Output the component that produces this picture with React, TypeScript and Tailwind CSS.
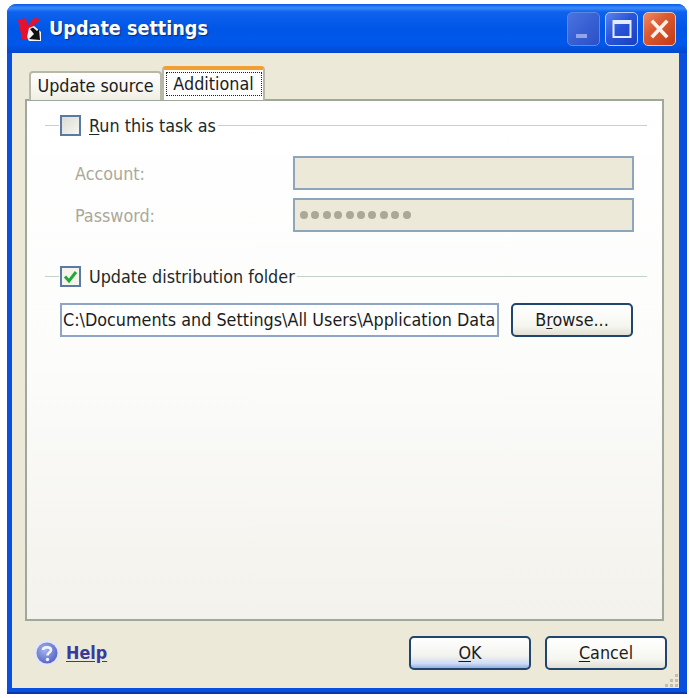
import React from "react";

const FONT = "font-['DejaVu_Sans_Condensed','DejaVu_Sans',sans-serif]";

function LogoK() {
  return (
    <svg width="24" height="24" viewBox="0 0 24 24" className="shrink-0">
      <path d="M1 3 L9 1 L10.5 9 L17 1 L24 2 L15 10 L11 15 L10 23 L5 22 Z" fill="#e8112d" />
      <path d="M12 11 L17 9 L24 15 L24 24 L12 24 L10 20 Z" fill="#f4f4f4" />
      <path d="M13 12 L16 10.5 L20 14 L22 12 L23 23 L12 22 L15 19 L17 17 Z" fill="#111" />
    </svg>
  );
}

function CaptionButton({ kind }: { kind: "min" | "max" | "close" }) {
  const bg =
    kind === "close"
      ? "bg-[linear-gradient(135deg,#ee8a66_0%,#dc5a32_40%,#c23a12_100%)]"
      : kind === "max"
        ? "bg-[linear-gradient(135deg,#5a84ee_0%,#2a55d8_45%,#1a3fc0_100%)]"
        : "bg-[linear-gradient(135deg,#4a74e0_0%,#3a62d4_45%,#2c50c4_100%)]";
  const border = kind === "min" ? "border-[#5f88e4]" : kind === "max" ? "border-[#b8ccf6]" : "border-[#e8c8bc]";
  return (
    <div className={`w-[33px] h-[34px] rounded-[5px] border flex items-center justify-center ${bg} ${border}`}>
      {kind === "min" && (
        <svg width="31" height="32" viewBox="0 0 31 32"><rect x="8" y="21" width="11" height="4" fill="#8fa6e8" /></svg>
      )}
      {kind === "max" && (
        <svg width="31" height="32" viewBox="0 0 31 32">
          <rect x="7.5" y="8" width="17" height="16" fill="none" stroke="#e4ecff" strokeWidth="2" />
          <rect x="7" y="7" width="18" height="4" fill="#e4ecff" />
        </svg>
      )}
      {kind === "close" && (
        <svg width="31" height="32" viewBox="0 0 31 32">
          <path d="M9 9 L22 23 M22 9 L9 23" stroke="#fff0ea" strokeWidth="3.6" strokeLinecap="square" />
        </svg>
      )}
    </div>
  );
}

function Check({ checked }: { checked?: boolean }) {
  return (
    <div
      className={`w-[21px] h-[21px] shrink-0 border-2 border-[#5a7aa4] flex items-center justify-center ${
        checked ? "bg-[#f4f4ec]" : "bg-[linear-gradient(135deg,#dcdcd6_0%,#f6f6f2_100%)]"
      }`}
    >
      {checked && (
        <svg width="15" height="15" viewBox="0 0 15 15">
          <path d="M2 7.5 L6 12 L13 3" fill="none" stroke="#22a83a" strokeWidth="3" />
        </svg>
      )}
    </div>
  );
}

function GroupHeader({ checked, children }: { checked?: boolean; children: React.ReactNode }) {
  return (
    <div className="flex items-center h-[21px] ml-[18px] mr-[15px]">
      <div className="w-[14px] h-px bg-[#c4d2cc] mr-px" />
      <Check checked={checked} />
      <span className="ml-[8px] mr-[2px] text-[17.8px] leading-[21px] text-[#1c2a2a] whitespace-nowrap">{children}</span>
      <div className="flex-1 h-px bg-[#c4d2cc]" />
    </div>
  );
}

function Field({ label, dots }: { label: string; dots?: boolean }) {
  return (
    <div className="flex items-center h-[34px]">
      <span className="w-[266px] pl-[48px] pt-[3px] text-[17.8px] text-[#aca899]">{label}</span>
      <div className="w-[341px] h-[34px] bg-[#ece9d8] border-2 border-[#8ea6bc] flex items-center gap-[3.4px] pl-[5px]">
        {dots &&
          Array.from({ length: 10 }).map((_, i) => (
            <div key={i} className="w-[8px] h-[8px] rounded-full bg-[#aca899]" />
          ))}
      </div>
    </div>
  );
}

function Button({ children, className, primary }: { children: React.ReactNode; className?: string; primary?: boolean }) {
  return (
    <div
      className={`h-[34px] rounded-[5px] border-2 border-[#20456e] flex items-center justify-center text-[17.8px] text-[#1c1c1c] ${
        primary
          ? "bg-[linear-gradient(180deg,#ffffff_0%,#f2f2ee_60%,#cfdcf4_85%,#8fb0e8_100%)]"
          : "bg-[linear-gradient(180deg,#ffffff_0%,#f6f6f0_70%,#e2e0d4_100%)]"
      } ${className ?? ""}`}
    >
      {children}
    </div>
  );
}

function Grip() {
  return (
    <svg width="16" height="16" viewBox="0 0 16 16" className="absolute right-0 bottom-0">
      {[[12, 2], [7, 7], [12, 7], [2, 12], [7, 12], [12, 12]].map(([x, y]) => (
        <rect key={`${x}-${y}`} x={x} y={y} width="3" height="3" fill="#c2bfae" />
      ))}
    </svg>
  );
}

export default function App() {
  return (
    <div className={`w-[689px] h-[698px] bg-white pt-[4px] pl-[7px] ${FONT}`}>
      <div className="w-[680px] h-[690px] flex flex-col rounded-t-[9px] overflow-hidden bg-[#0a50e0] border-b-2 border-[#0638b4]">
        {/* Title bar */}
        <div className="h-[49px] shrink-0 flex items-center pl-[10px] pr-[11px] bg-[linear-gradient(180deg,#0a5ae8_0%,#3a8cfa_8%,#0e62ee_16%,#0056e6_50%,#0058ea_82%,#0446d0_100%)]">
          <LogoK />
          <span className="ml-[8px] text-[19.6px] leading-none font-bold text-white whitespace-nowrap [text-shadow:1px_1px_1px_#0a2a80]">
            Update settings
          </span>
          <div className="ml-auto flex gap-[5px]">
            <CaptionButton kind="min" />
            <CaptionButton kind="max" />
            <CaptionButton kind="close" />
          </div>
        </div>

        {/* Client */}
        <div className="flex-1 ml-[5px] mr-[8px] mb-[4px] bg-[#ece9d8] flex flex-col relative">
          <div className="pt-[13px] pl-[17px] h-[47px] flex items-end shrink-0 relative z-10">
            <div className="w-[133px] h-[29px] rounded-t-[4px] border-2 border-b-0 border-[#b8b8a8] bg-[linear-gradient(180deg,#ffffff_0%,#f0efe6_100%)] flex items-center justify-center text-[17.8px] text-[#1c1c1c]">
              Update source
            </div>
            <div className="w-[103px] h-[34px] rounded-t-[4px] border-x-2 border-[#b8b8a8] border-t-[4px] border-t-[#f0a030] bg-white flex items-start justify-center pt-[2px]">
              <span className="w-[96px] h-[24px] flex items-center justify-center border border-dotted border-[#222] text-[17.8px] text-[#1c1c1c]">Additional</span>
            </div>
          </div>

          {/* Tab panel */}
          <div className="ml-[13px] w-[639px] h-[522px] -mt-[1px] border-2 border-[#a0a89c] bg-[linear-gradient(180deg,#ffffff_0%,#fcfcfb_50%,#f3f2ec_100%)] pt-[14px]">
            <GroupHeader>
              <span className="underline underline-offset-2">R</span>un this task as
            </GroupHeader>
            <div className="mt-[20px] flex flex-col gap-[8px]">
              <Field label="Account:" />
              <Field label="Password:" dots />
            </div>
            <div className="mt-[34px]">
              <GroupHeader checked>Update distribution folder</GroupHeader>
            </div>
            <div className="mt-[16px] ml-[33px] flex gap-[12px]">
              <div className="w-[439px] h-[34px] bg-white border-2 border-[#8ea6c4] flex items-center pl-[1px] text-[17.8px] text-[#1c1c1c] whitespace-nowrap overflow-hidden">
                C:\Documents and Settings\All Users\Application Data
              </div>
              <Button className="w-[122px]">
                <span>
                  B<span className="underline underline-offset-2">r</span>owse...
                </span>
              </Button>
            </div>
          </div>

          {/* Footer */}
          <div className="flex-1 flex items-center pl-[21px] pr-[12px] pb-[3px]">
            <svg width="28" height="28" viewBox="0 0 28 28" className="shrink-0">
              <defs>
                <radialGradient id="helpball" cx="40%" cy="35%" r="70%">
                  <stop offset="0%" stopColor="#a4b4ee" />
                  <stop offset="100%" stopColor="#5262c4" />
                </radialGradient>
              </defs>
              <circle cx="14" cy="14" r="13" fill="#e4e6f4" />
              <circle cx="14" cy="14" r="10.5" fill="url(#helpball)" />
              <path d="M10 11 C10 7.5 18 7.5 18 11 C18 13.5 14.5 13.5 14.5 16.5" fill="none" stroke="#f2f4ff" strokeWidth="2.6" />
              <circle cx="14.5" cy="20.5" r="1.7" fill="#f2f4ff" />
            </svg>
            <span className="ml-[5px] text-[17.8px] font-bold text-[#3a3a9c] underline underline-offset-2">Help</span>
            <div className="ml-auto flex gap-[14px]">
              <Button primary className="w-[122px]">
                <span>
                  <span className="underline underline-offset-2">O</span>K
                </span>
              </Button>
              <Button className="w-[122px]">
                <span>
                  <span className="underline underline-offset-2">C</span>ancel
                </span>
              </Button>
            </div>
          </div>
          <Grip />
        </div>
      </div>
    </div>
  );
}
